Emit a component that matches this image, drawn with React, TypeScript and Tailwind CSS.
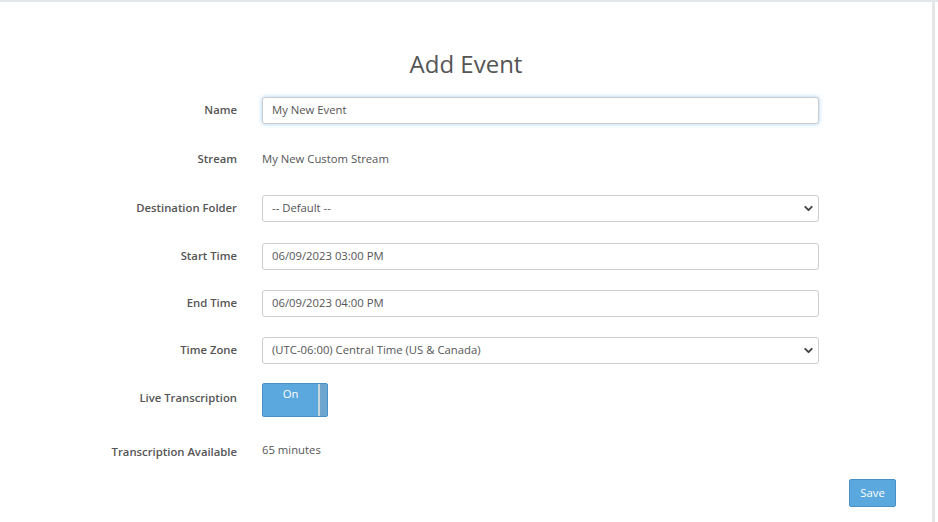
import { ChevronDown } from 'lucide-react'

const labelCls = "w-[237px] shrink-0 text-right text-[11.3px] font-semibold text-[#555]"
const inputCls =
  "h-[27px] w-[557px] rounded-[3px] border border-[#ccc] bg-white px-[9px] text-[11.3px] text-[#555] flex items-center"

function Row({ label, children, h = 'h-[47px]' }: { label: string; children: React.ReactNode; h?: string }) {
  return (
    <div className={`flex items-center ${h}`}>
      <div className={labelCls}>{label}</div>
      <div className="ml-[25px] flex items-center">{children}</div>
    </div>
  )
}

function SelectBox({ value }: { value: string }) {
  return (
    <div className={`${inputCls} justify-between pr-[3px]`}>
      <span>{value}</span>
      <ChevronDown size={13} strokeWidth={3.5} className="text-[#444]" />
    </div>
  )
}

export default function App() {
  return (
    <div className="min-h-screen bg-white" style={{ fontFamily: '"Open Sans", sans-serif' }}>
      <div className="h-[2px] bg-[#e3e7ea]" />
      <div className="flex">
        <div className="h-[520px] w-[935px] border-r-[3px] border-[#e6e6e6] bg-white">
          <h1 className="pt-[46px] text-center text-[24px] leading-[32px] text-[#555]">Add Event</h1>

          <div className="mt-[7px]">
            <Row label="Name">
              <div className={`${inputCls} border-[#66afe9] shadow-[0_0_4px_rgba(102,175,233,0.6)]`}>My New Event</div>
            </Row>
            <Row label="Stream" h="h-[51px]">
              <span className="text-[11.3px] text-[#555]">My New Custom Stream</span>
            </Row>
            <Row label="Destination Folder">
              <SelectBox value="-- Default --" />
            </Row>
            <Row label="Start Time" h="h-[48px]">
              <div className={inputCls}>06/09/2023 03:00 PM</div>
            </Row>
            <Row label="End Time" h="h-[46px]">
              <div className={inputCls}>06/09/2023 04:00 PM</div>
            </Row>
            <Row label="Time Zone" h="h-[48px]">
              <SelectBox value="(UTC-06:00) Central Time (US & Canada)" />
            </Row>
            <Row label="Live Transcription" h="h-[48px]">
              <div className="mt-[4px] flex h-[34px] w-[66px] overflow-hidden rounded-[2px] border border-[#4a91c9] bg-[#5aa8de]">
                <div className="flex-1 pt-[2px] text-center text-[11.3px] text-white">On</div>
                <div className="w-[9px] border-l-2 border-[#c8d6e0] bg-[#6ea6cf]" />
              </div>
            </Row>
            <Row label="Transcription Available" h="h-[60px]">
              <span className="-mt-[4px] text-[11.3px] text-[#555]">65 minutes</span>
            </Row>
          </div>

          <div className="-mt-[3px] flex justify-end pr-[36px]">
            <button className="h-[28px] w-[47px] rounded-[2px] border border-[#4a91c9] bg-[#5aa8de] text-[11.3px] text-white">
              Save
            </button>
          </div>
        </div>
      </div>
    </div>
  )
}
